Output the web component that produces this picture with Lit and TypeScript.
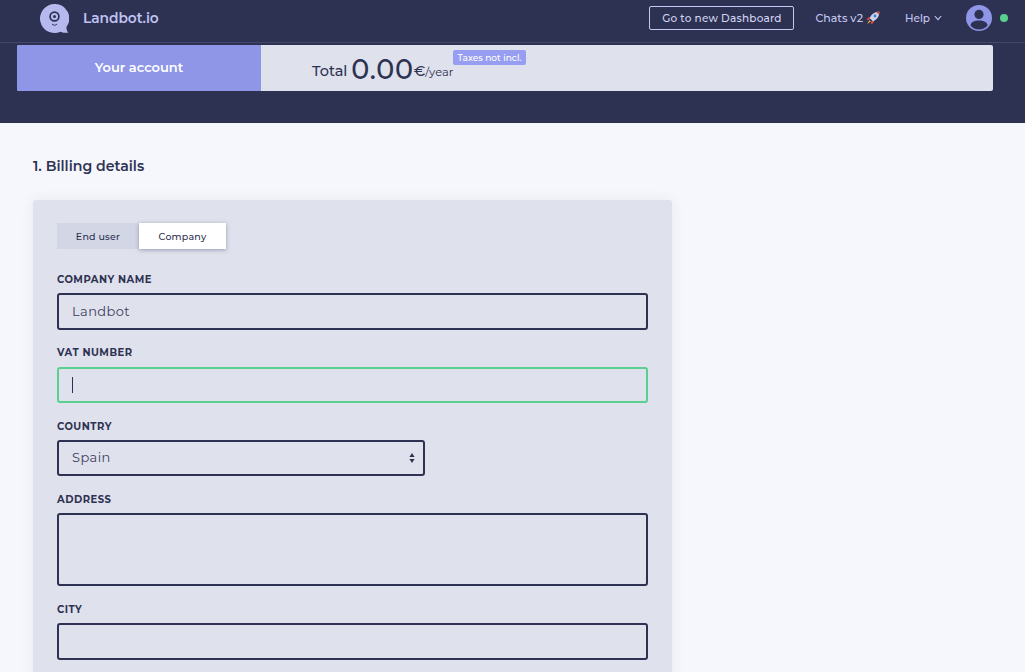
import { LitElement, html, css } from "lit";
import { customElement } from "lit/decorators.js";

@customElement("app-root")
export class AppRoot extends LitElement {
  static styles = css`
    :host { display: block; height: 672px; overflow: hidden; background: #f5f7fc; color: #2e3252; font-family: Montserrat, Inter, "Liberation Sans", sans-serif; }
    .top { background: #2e3252; height: 123px; }
    .nav { height: 36px; padding: 0 17px 6px 40px; box-sizing: content-box; border-bottom: 1px solid #43476a; display: flex; align-items: center; color: #c5c9f2; }
    .logo { width: 29px; height: 29px; display: block; }
    .brand { margin-left: 14px; font-size: 13.8px; font-weight: 600; letter-spacing: -.05px; color: #c0c4f3; }
    .spacer { flex: 1; }
    .btn { width: 145px; height: 24px; box-sizing: border-box; border: 1px solid #c5c9f2; border-radius: 2px; display: flex; align-items: center; justify-content: center; font-size: 10.5px; font-weight: 500; letter-spacing: .2px; color: #d3d6f5; }
    .chats { margin-left: 21px; font-size: 11px; font-weight: 500; display: flex; align-items: center; gap: 3px; }
    .rocket { width: 14px; height: 14px; display: block; }
    .help { margin-left: 25px; font-size: 10.5px; font-weight: 500; display: flex; align-items: center; gap: 4px; }
    .chev { width: 8px; height: 6px; display: block; }
    .avatar { width: 26px; height: 26px; display: block; margin-left: 24px; }
    .dot { width: 8px; height: 8px; border-radius: 50%; background: #5ad08f; margin-left: 8px; }
    .bar { margin: 2px 32px 0 17px; height: 46px; display: flex; background: #dfe1ec; border-radius: 2px; overflow: hidden; }
    .acct { width: 244px; background: #8f96e8; color: #fff; display: flex; align-items: center; justify-content: center; font-size: 13px; font-weight: 600; padding-bottom: 2px; box-sizing: border-box; }
    .total { position: relative; flex: 1; padding: 10px 0 0 51px; color: #2e3252; line-height: 30px; white-space: nowrap; }
    .t1 { font-size: 14.5px; font-weight: 500; vertical-align: 3px; }
    .t2 { font-size: 27px; font-weight: 500; margin-left: 4px; letter-spacing: .7px; }
    .t3 { font-size: 14.500px; font-weight: 500; vertical-align: 3px; }
    .t4 { font-size: 11.5px; vertical-align: 3px; }
    .badge { position: absolute; left: 192px; top: 5px; width: 73px; height: 15px; background: #979df0; color: #fff; border-radius: 2px; font-size: 9px; line-height: 15px; font-weight: 500; text-align: center; }
    main { padding: 34px 0 0 33px; }
    h1 { margin: 0; font-size: 14.1px; line-height: 18px; font-weight: 600; color: #2e3252; }
    .card { margin-top: 25px; width: 639px; box-sizing: border-box; background: #dfe1ec; border-radius: 3px; padding: 23px 24px 24px; box-shadow: 0 0 14px rgba(46,50,82,.07); }
    .tabs { display: flex; width: 169px; height: 26px; background: #d3d6e4; margin-bottom: 23px; }
    .tab { display: flex; align-items: center; justify-content: center; font-size: 9.5px; font-weight: 500; letter-spacing: .2px; }
    .tab.a { width: 82px; }
    .tab.b { width: 87px; background: #fff; box-shadow: 0 1px 4px rgba(46,50,82,.4); }
    .lab { display: block; height: 14px; line-height: 15px; font-size: 10px; font-weight: 700; letter-spacing: .5px; margin-bottom: 7px; }
    .field { margin-bottom: 16px; }
    .field.v .lab { line-height: 14px; }
    .inp { box-sizing: border-box; width: 591px; height: 36.5px; border: 2px solid #2e3252; border-radius: 3px; display: flex; align-items: center; padding-left: 13px; font-size: 13px; letter-spacing: .4px; color: #3c4060; }
    .inp.ok { border-color: #5ad08f; }
    .caret { width: 1px; height: 16px; background: #2e3252; }
    .sel { width: 368px; height: 36px; position: relative; padding-bottom: 2px; }
    .arrows { position: absolute; right: 8px; top: 11px; width: 6px; height: 10px; display: block; }
    .area { height: 73px; }
  `;

  render() {
    return html`
      <div class="top">
        <nav class="nav">
          <svg class="logo" viewBox="0 0 29 29">
            <path fill="#b5b9ee" d="M14.5 0a14.5 14.500 0 1 0 6 27.700c2.300 1 5 1.300 7.800 1.100-1.300-1.400-1.900-3.400-1.900-5.700A14.500 14.500 0 0 0 14.500 0z"/>
            <circle cx="14.5" cy="12.5" r="4.4" fill="none" stroke="#2e3252" stroke-width="1.7"/>
            <circle cx="14.5" cy="12.5" r="1.5" fill="#2e3252"/>
            <path d="M12 20c1.500 1.600 3.500 1.600 5 0" fill="none" stroke="#2e3252" stroke-width="1"/>
          </svg>
          <span class="brand">Landbot.io</span>
          <span class="spacer"></span>
          <span class="btn">Go to new Dashboard</span>
          <span class="chats">Chats v2
            <svg class="rocket" viewBox="0 0 14 14">
              <path fill="#e0483e" d="M4.200 6 1.500 7l-.6 2.400 2.500-.7zM8 9.800l-1 2.700-2.400.6.7-2.500z"/>
              <path fill="#f4c534" d="M3.600 9.200 1 13l3.800-2.600z"/>
              <path fill="#c9d3ea" d="M13.300.7c-3-.3-5.800 1-7.800 3.300L3.600 7l3.400 3.400 3-1.900c2.300-2 3.600-4.800 3.300-7.800z"/>
              <circle cx="9" cy="5" r="1.4" fill="#3c7ad0"/>
              <path fill="#d8443c" d="M13.300.7c-1.100-.1-2.100 0-3.100.3l2.800 2.800c.3-1 .4-2 .3-3.100z"/>
            </svg>
          </span>
          <span class="help">Help
            <svg class="chev" viewBox="0 0 8 6"><path d="M.8 1 4 4.600 7.200 1" fill="none" stroke="#c5c9f2" stroke-width="1.100"/></svg>
          </span>
          <svg class="avatar" viewBox="0 0 26 26">
            <defs><clipPath id="c"><circle cx="13" cy="13" r="13"/></clipPath></defs>
            <circle cx="13" cy="13" r="13" fill="#8f96e8"/>
            <g clip-path="url(#c)" fill="#2e3252">
              <circle cx="13" cy="9.400" r="4.600"/>
              <path d="M4.500 20.500c0-3.400 3.900-5.100 8.500-5.100s8.500 1.700 8.500 5.100c-2 2.500-5.100 4-8.500 4s-6.500-1.500-8.500-4z"/>
            </g>
          </svg>
          <span class="dot"></span>
        </nav>
        <div class="bar">
          <div class="acct">Your account</div>
          <div class="total">
            <span class="t1">Total</span><span class="t2">0.00</span><span class="t3">€</span><span class="t4">/year</span>
            <span class="badge">Taxes not incl.</span>
          </div>
        </div>
      </div>
      <main>
        <h1>1. Billing details</h1>
        <section class="card">
          <div class="tabs">
            <div class="tab a">End user</div>
            <div class="tab b">Company</div>
          </div>
          <div class="field"><span class="lab">COMPANY NAME</span><div class="inp">Landbot</div></div>
          <div class="field v"><span class="lab">VAT NUMBER</span><div class="inp ok"><span class="caret"></span></div></div>
          <div class="field"><span class="lab">COUNTRY</span>
            <div class="inp sel">Spain
              <svg class="arrows" viewBox="0 0 6 10"><path fill="#2e3252" d="M3 0 5.600 4H.4zM3 10 .4 6h5.200z"/></svg>
            </div>
          </div>
          <div class="field"><span class="lab">ADDRESS</span><div class="inp area"></div></div>
          <div class="field"><span class="lab">CITY</span><div class="inp"></div></div>
        </section>
      </main>
    `;
  }
}
